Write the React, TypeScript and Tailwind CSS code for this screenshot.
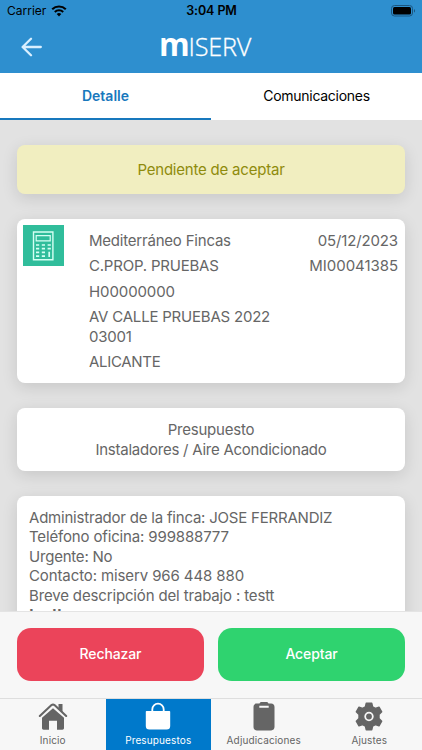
import type { ReactNode } from "react";

const card =
  "shrink-0 rounded-[8px] bg-white shadow-[0_4px_16px_rgba(0,0,0,0.12)]";

function StatusBar() {
  return (
    <div className="flex h-[22px] items-center justify-between pl-[7px] pr-[6px] text-black">
      <div className="flex w-[120px] items-center gap-[5px] text-[12px]">
        <span className="tracking-[0px]">Carrier</span>
        <svg width="16" height="12" viewBox="0 0 16 12" fill="none" stroke="currentColor">
          <path d="M1.2 4.3a9.8 9.8 0 0 1 13.6 0" strokeWidth="2.1" />
          <path d="M3.8 7a6 6 0 0 1 8.4 0" strokeWidth="2" />
          <path d="M8 11.4 5.700 9a3.400 3.400 0 0 1 4.600 0Z" fill="currentColor" stroke="none" />
        </svg>
      </div>
      <span className="text-[12.5px] font-semibold tracking-[-0.1px]">3:04 PM</span>
      <div className="flex w-[120px] justify-end">
        <svg width="25" height="12" viewBox="0 0 25 12">
          <rect x=".5" y=".5" width="21" height="10.5" rx="3" fill="none" stroke="#1b5680" />
          <rect x="2" y="2" width="18" height="7.5" rx="1.5" fill="#000" />
          <path d="M23 4v3.6c1.4-.5 1.4-3.1 0-3.6Z" fill="#1b5680" />
        </svg>
      </div>
    </div>
  );
}

function Header() {
  return (
    <header className="h-[73px] shrink-0 bg-[#2e8fcf]">
      <StatusBar />
      <div className="flex h-[51px] items-center justify-between px-[21px]">
        <svg className="mb-[2px] w-[21px] text-[#d9efff]" height="20" viewBox="0 0 21 20" fill="none" stroke="currentColor" strokeWidth="2.3" strokeLinecap="round" strokeLinejoin="round">
          <path d="M10 1.800 1.600 10l8.400 8.200M1.800 10h18" />
        </svg>
        <svg width="106" height="51" viewBox="0 0 106 51" fill="#fff">
          <text x="1" y="34" fontFamily="Open Sans" fontWeight="700" fontSize="31.500" textLength="30.500" lengthAdjust="spacingAndGlyphs">m</text>
          <text x="30.500" y="34" fontFamily="Open Sans" fontWeight="300" fontSize="25" textLength="62.500" lengthAdjust="spacingAndGlyphs" stroke="#fff" strokeWidth=".3">ISERV</text>
        </svg>
        <span className="w-[21px]" />
      </div>
    </header>
  );
}

function NavItem({ label, active, children }: { label: string; active?: boolean; children: ReactNode }) {
  return (
    <div className={`flex flex-1 flex-col items-center pt-[3px] ${active ? "bg-[#0079cb] text-white" : "text-[#656565]"}`}>
      {children}
      <span className="mt-[2px] text-[10px] leading-[14px] tracking-[0.13px]">{label}</span>
    </div>
  );
}

export default function App() {
  return (
    <div className="flex h-[750px] w-[422px] flex-col overflow-hidden bg-[#e2e2e2] font-['Inter',sans-serif] text-[15px] leading-[19.4px] tracking-[-0.21px] text-[#666]">
      <Header />
      <div className="flex h-[47px] shrink-0 bg-white text-[14px]">
        <div className="flex flex-1 items-center justify-center border-b-2 border-[#1878bd] font-semibold tracking-normal text-[#1878bd]">Detalle</div>
        <div className="flex flex-1 items-center justify-center border-b-2 border-white tracking-[-0.28px] text-black">Comunicaciones</div>
      </div>
      <main className="flex min-h-0 flex-1 flex-col gap-[25px] overflow-hidden px-[17px] pt-[25px]">
        <div className="flex h-[49px] shrink-0 items-center justify-center rounded-[8px] bg-[#f1eec0] text-[#8f8b0c] shadow-[0_4px_16px_rgba(0,0,0,0.12)]">
          Pendiente de aceptar
        </div>
        <section className={`${card} flex h-[164px] px-[6px] pt-[6px]`}>
          <svg width="41" height="41" viewBox="0 0 41 41" fill="none" stroke="#d5fff4">
            <path fill="#30bd9b" stroke="none" d="M0 0h41v41H0z" />
            <path strokeWidth="1.4" d="M10.5 7h19.4v27.800H10.5z" />
            <path strokeWidth="1.2" d="M13.2 10.6h14v5.2h-14z" />
            <path strokeWidth="1.7" d="M13 20h3.200m2.600 0H22m2.600 0h3.200M13 23.700h3.200m2.600 0H22m2.600 0h3.200M13 27.400h3.200m2.600 0H22M13 31.100h3.200m2.600 0H22M26.200 26.700v5.200" />
          </svg>
          <div className="ml-[25px] mt-[6px] flex w-[190px] flex-col gap-[6px]">
            <span>Mediterráneo Fincas</span>
            <span>C.PROP. PRUEBAS</span>
            <span className="tracking-[-0.1px]">H00000000</span>
            <span>AV CALLE PRUEBAS 2022<br />03001</span>
            <span className="tracking-[-0.3px]">ALICANTE</span>
          </div>
          <div className="mr-[1px] mt-[6px] flex flex-1 flex-col items-end gap-[6px] tracking-[-0.13px]">
            <span>05/12/2023</span>
            <span className="tracking-[-0.05px]">MI00041385</span>
          </div>
        </section>
        <section className={`${card} flex h-[63px] flex-col items-center justify-center`}>
          <span>Presupuesto</span>
          <span className="tracking-[-0.24px]">Instaladores / Aire Acondicionado</span>
        </section>
        <section className={`${card} h-[180px] px-3 pt-[12px]`}>
          <p>Administrador de la finca: JOSE FERRANDIZ</p>
          <p className="tracking-[-0.15px]">Teléfono oficina: 999888777</p>
          <p>Urgente: No</p>
          <p className="tracking-[-0.11px]">Contacto: miserv 966 448 880</p>
          <p className="tracking-[-0.15px]">Breve descripción del trabajo : testt</p>
          <p className="font-bold tracking-[0.1px]">testt</p>
        </section>
      </main>
      <div className="flex h-[87px] shrink-0 items-start gap-[14px] border-t border-[#e4e4e4] bg-[#f7f7f7] px-[17px] pt-[16px] text-[14px] font-medium tracking-[-0.12px] text-white">
        <button className="h-[53px] flex-1 rounded-[14px] bg-[#eb445a] pb-[2px]">Rechazar</button>
        <button className="h-[53px] flex-1 rounded-[14px] bg-[#2fd36f] pb-[2px]">Aceptar</button>
      </div>
      <nav className="flex h-[52px] shrink-0 border-t border-[#dedede] bg-[#f7f7f7]">
        <NavItem label="Inicio">
          <svg width="30" height="29" viewBox="0 0 30 29" fill="currentColor">
            <path d="M15 6.200 4 15.700V26c0 1 .6 1.700 1.600 1.700h5.400v-9h8v9h5.400c1 0 1.600-.7 1.600-1.700V15.700Z" />
            <path d="m1.800 14 11.700-10.900c1-.8 2-.8 3 0L28.200 14" fill="none" stroke="currentColor" strokeWidth="2.100" strokeLinecap="round" />
            <path d="M20.500 2h4v8.400l-4-3.800Z" />
          </svg>
        </NavItem>
        <NavItem label="Presupuestos" active>
          <svg width="30" height="29" viewBox="0 0 30 29" fill="currentColor">
            <path d="M3.500 9h23c.4 0 .7.300.7.700v14.300a3.600 3.600 0 0 1-3.600 3.600H6.400A3.600 3.600 0 0 1 2.800 24V9.700c0-.4.3-.7.7-.7Z" />
            <path d="M9.300 10V7.400a5.700 5.700 0 0 1 11.400 0V10" fill="none" stroke="currentColor" strokeWidth="1.800" />
          </svg>
        </NavItem>
        <NavItem label="Adjudicaciones">
          <svg width="30" height="29" viewBox="0 0 30 29" fill="currentColor">
            <path fillRule="evenodd" d="M10.500 1.600C10.800.7 11.500 0 12.500 0h5c1 0 1.700.7 2 1.600h2.700c2 0 3.300 1.300 3.300 3.300v20.200c0 2-1.300 3.300-3.300 3.300H7.800c-2 0-3.300-1.300-3.300-3.300V4.900c0-2 1.300-3.300 3.300-3.300ZM10.300 3.700v2.100h9.400V3.700Z" />
          </svg>
        </NavItem>
        <NavItem label="Ajustes">
          <svg width="30" height="29" viewBox="0 0 30 29" fill="currentColor">
            <path fillRule="evenodd" stroke="currentColor" strokeWidth="1.400" strokeLinejoin="round" d="M12.200 1.300h5.600l.8 3.500 2.800 1.600 3.600-1.300 2.700 4.700-2.700 2.600v4.200l2.700 2.600-2.700 4.700-3.600-1.300-2.800 1.600-.8 3.500h-5.600l-.8-3.500-2.800-1.600L5 23.900l-2.700-4.700L5 16.600v-4.200L2.300 9.800 5 5.100l3.600 1.300 2.800-1.600ZM15 9.100a5.400 5.400 0 1 0 0 10.800 5.400 5.400 0 0 0 0-10.800Z" />
            <circle cx="15" cy="14.500" r="2.900" />
          </svg>
        </NavItem>
      </nav>
    </div>
  );
}
